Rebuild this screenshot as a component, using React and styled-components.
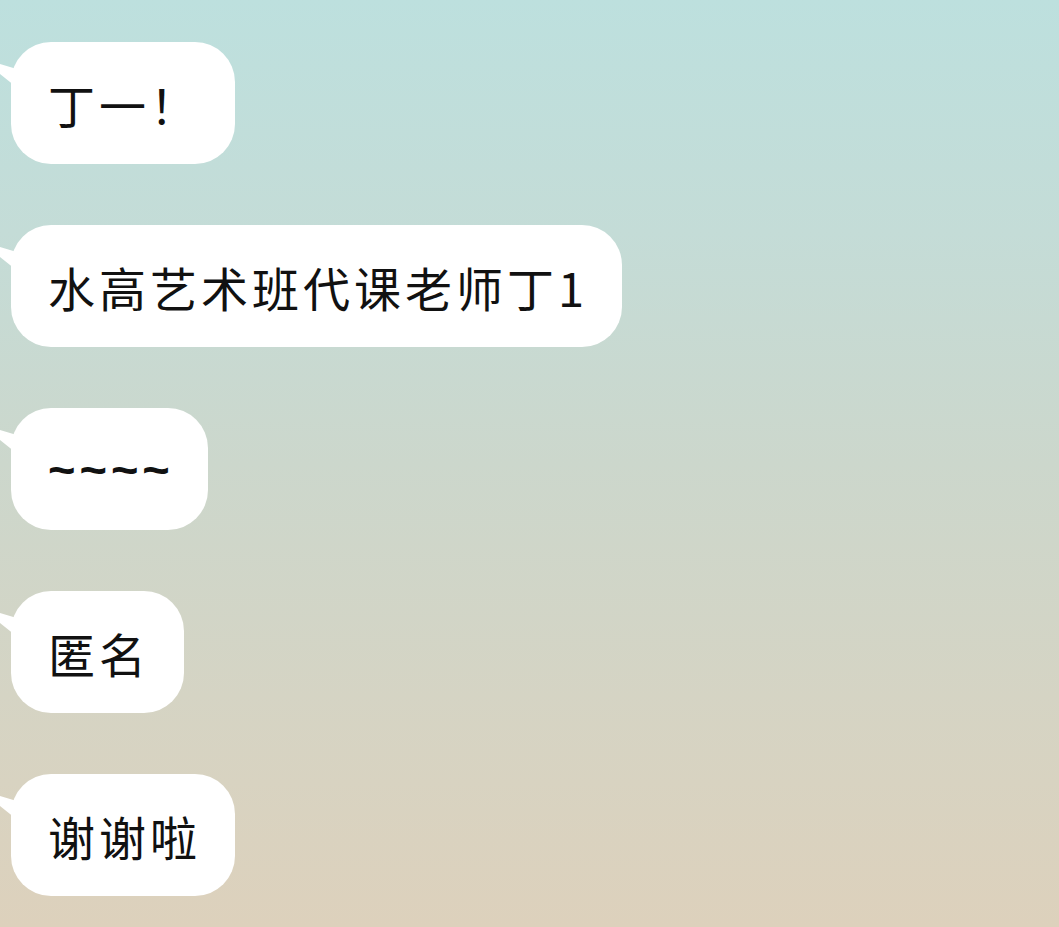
import React from "react";
import styled, { createGlobalStyle } from "styled-components";

const GlobalStyle = createGlobalStyle`
  html, body {
    margin: 0;
    padding: 0;
  }
  body {
    font-family: "Noto Sans CJK SC", "Noto Sans", sans-serif;
  }
`;

const Screen = styled.div`
  width: 1059px;
  height: 927px;
  overflow: hidden;
  background: linear-gradient(
    180deg,
    #bde0de 0%,
    #c4dcd7 25%,
    #ccd7cc 50%,
    #d5d4c4 75%,
    #ddd1bc 100%
  );
  display: flex;
  flex-direction: column;
  align-items: flex-start;
  gap: 61px;
  padding: 42px 0 0 11px;
  box-sizing: border-box;
`;

const Bubble = styled.div`
  position: relative;
  height: 122px;
  box-sizing: border-box;
  padding: 0 34px 0 37px;
  display: flex;
  align-items: center;
  background: #fff;
  border-radius: 40px;
  color: #111;
  font-size: 47px;
  letter-spacing: 4px;
  white-space: nowrap;
  font-family: ${(p) =>
    p.$latin ? `"Liberation Sans", sans-serif` : "inherit"};
  font-weight: ${(p) => (p.$latin ? 700 : 400)};
`;

const Tail = styled.span`
  position: absolute;
  left: -31px;
  top: 14px;
  width: 40px;
  height: 40px;
  background: #fff;
  clip-path: polygon(0 2px, 40px 14px, 40px 34px);
`;

const messages = [
  { text: "丁一！" },
  { text: "水高艺术班代课老师丁1" },
  { text: "~~~~", latin: true },
  { text: "匿名" },
  { text: "谢谢啦" },
];

function App() {
  return (
    <>
      <GlobalStyle />
      <Screen>
        {messages.map((m, i) => (
          <Bubble key={i} $latin={m.latin}>
            <Tail />
            {m.text}
          </Bubble>
        ))}
      </Screen>
    </>
  );
}

export default App;
